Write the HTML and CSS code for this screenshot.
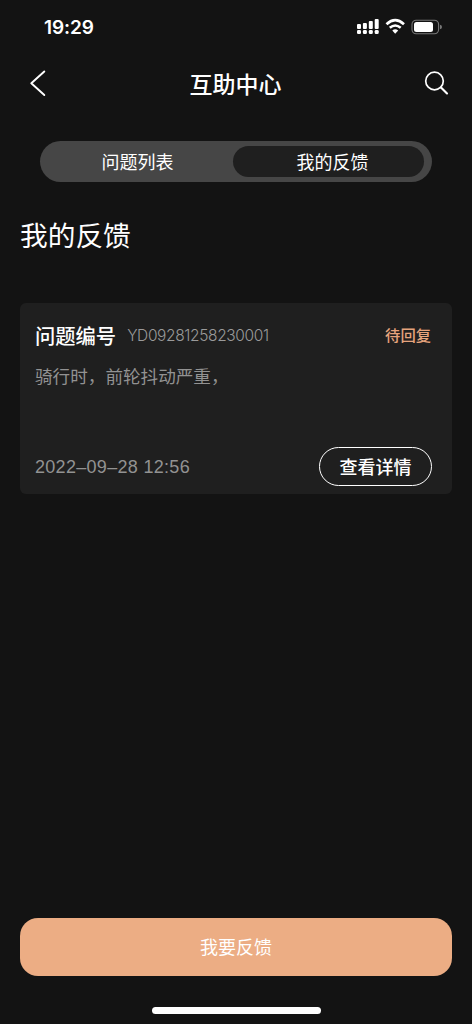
FILE: index.html
```html
<!DOCTYPE html>
<html lang="zh-CN">
<head>
<meta charset="utf-8">
<meta name="viewport" content="width=device-width, initial-scale=1">
<title>互助中心</title>
<link rel="stylesheet" href="styles.css">
</head>
<body>
<div class="screen">
  <div class="status">
    <span class="clock">19:29</span>
    <svg class="status-icons" width="86" height="18" viewBox="0 0 86 18" fill="#fff">
      <rect x="0" y="7" width="4" height="5" rx="1"/><rect x="5.9" y="6" width="4" height="6" rx="1"/><rect x="11.800" y="4" width="4" height="8" rx="1"/><rect x="17.700" y="2" width="4" height="10" rx="1"/>
      <rect x="0" y="13" width="4" height="4" rx="1.300"/><rect x="5.9" y="13" width="4" height="4" rx="1.300"/><rect x="11.800" y="13" width="4" height="4" rx="1.300"/><rect x="17.700" y="13" width="4" height="4" rx="1.300"/>
      <path d="M29.500 7.200Q38.200-.8 47 7.200" fill="none" stroke="#fff" stroke-width="2.700"/>
      <path d="M32.800 10.800Q38.200 6.200 43.700 10.800" fill="none" stroke="#fff" stroke-width="2.600"/>
      <path d="M35.300 13.500Q38.200 11.200 41.200 13.500L38.200 16.700Z"/>
      <rect x="55" y="3.200" width="26.600" height="13.600" rx="4.200" fill="none" stroke="#777" stroke-width="1.100"/>
      <rect x="57" y="5" width="19" height="10" rx="2.500"/>
      <path d="M83 7.800Q85 8.300 85 10T83 12.200Z" fill="#777"/>
    </svg>
  </div>
  <header class="nav">
    <svg class="back" width="20" height="30" viewBox="0 0 20 30" fill="none" stroke="#fff" stroke-width="1.900" stroke-linecap="round" stroke-linejoin="round"><path d="M16.300 3.500L3.300 15.300L16.300 27"/></svg>
    <h1 class="nav-title">互助中心</h1>
    <svg class="search" width="26" height="26" viewBox="0 0 26 26" fill="none" stroke="#fff" stroke-width="1.700" stroke-linecap="round"><circle cx="10.500" cy="11" r="8.800"/><path d="M17 17.500L23 23.500" stroke-width="2.100"/></svg>
  </header>
  <nav class="tabs">
    <span class="tab">问题列表</span>
    <span class="tab tab-active">我的反馈</span>
  </nav>
  <h2 class="heading">我的反馈</h2>
  <article class="card">
    <div class="card-head">
      <span class="card-title">问题编号</span>
      <span class="card-number">YD09281258230001</span>
      <span class="card-state">待回复</span>
    </div>
    <p class="card-text">骑行时，前轮抖动严重，</p>
    <div class="card-foot">
      <time class="card-time">2022–09–28 12:56</time>
      <button class="detail">查看详情</button>
    </div>
  </article>
  <button class="submit">我要反馈</button>
  <div class="home-bar"></div>
</div>
</body>
</html>
```
FILE: styles.css
```css
* { box-sizing: border-box; }
body {
  margin: 0;
  background: #131313;
  color: #fff;
  font-family: "Liberation Sans", "Noto Sans CJK SC", sans-serif;
}
svg { display: block; flex: none; }
button { padding: 0; border: 0; font: inherit; color: inherit; }
.screen {
  display: flex;
  flex-direction: column;
  width: 472px;
  height: 1024px;
  padding: 0 20px;
}
.status {
  display: flex;
  justify-content: space-between;
  align-items: center;
  height: 54px;
  padding: 0 9px 0 24px;
}
.status-icons { margin-bottom: 2px; }
.clock {
  padding-top: 1px;
  font: 600 19px/24px Inter, sans-serif;
  letter-spacing: -.1px;
}
.nav {
  display: flex;
  justify-content: space-between;
  align-items: center;
  height: 58px;
  padding: 0 2px 0 8px;
}
.nav-title {
  margin: 0 1px 0 0;
  padding-top: 3px;
  font-size: 23px;
  line-height: 34px;
  font-weight: 500;
}
.tabs {
  display: grid;
  grid-template-columns: 193px 191px;
  height: 41px;
  margin: 29px 20px 0;
  padding: 5px 8px 5px 0;
  border-radius: 21px;
  background: #464646;
}
.tab {
  height: 31px;
  padding: 1px 0 0 2px;
  border-radius: 16px;
  text-align: center;
  font-size: 18px;
  line-height: 32px;
}
.tab-active { padding-left: 8px; background: #1f1f1f; }
.heading {
  margin: 34px 0 0;
  font-size: 27.700px;
  line-height: 42px;
  font-weight: 400;
}
.card {
  display: flex;
  flex-direction: column;
  height: 191px;
  margin-top: 45px;
  padding: 17px 20px 8px 15px;
  border-radius: 6px;
  background: #1f1f1f;
}
.card-head {
  display: flex;
  align-items: center;
  height: 30px;
}
.card-title { font-size: 20.300px; font-weight: 500; }
.card-number {
  padding-top: 1px;
  margin-left: 11px;
  font: 300 15.500px/20px Inter, sans-serif;
  letter-spacing: -.36px;
  color: #9a9a9a;
}
.card-state {
  margin: 0 1px 2px auto;
  font-size: 15.300px;
  font-weight: 500;
  color: #e6a47d;
}
.card-text {
  margin: 14px 0 0;
  font-size: 17.600px;
  line-height: 26px;
  color: #929292;
}
.card-foot {
  display: flex;
  justify-content: space-between;
  align-items: center;
  margin-top: auto;
}
.card-time {
  padding-top: 1px;
  font-size: 18px;
  letter-spacing: .3px;
  color: #929292;
}
.detail {
  width: 113px;
  height: 39px;
  padding-bottom: 2px;
  border: 1.500px solid #fff;
  border-radius: 20px;
  background: none;
  font-size: 18px;
  font-weight: 500;
}
.submit {
  height: 58px;
  margin-top: auto;
  padding-bottom: 2px;
  border-radius: 18px;
  background: #ecad84;
  font-size: 18px;
}
.home-bar {
  align-self: center;
  width: 169px;
  height: 7px;
  margin: 31px 0 10px;
  border-radius: 4px;
  background: #fff;
}
```
